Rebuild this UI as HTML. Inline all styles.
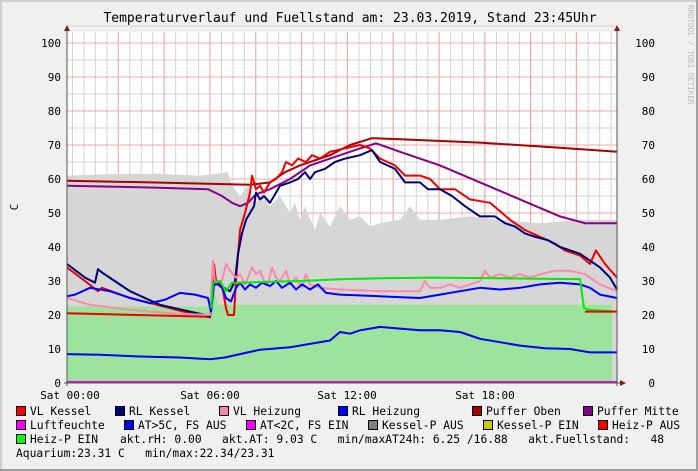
<!DOCTYPE html>
<html><head><meta charset="utf-8"><style>
body{margin:0;background:#f0f0f0;}
#w{position:relative;width:698px;height:471px;overflow:hidden;background:#f0f0f0;}
svg{position:absolute;left:0;top:0;}
text{font-family:"DejaVu Sans Mono","Liberation Mono",monospace;white-space:pre;}
</style></head><body><div id="w">
<svg id="s" width="698" height="471" xmlns="http://www.w3.org/2000/svg">
<rect x="0" y="0" width="698" height="471" fill="#f0f0f0"/>
<rect x="0" y="0" width="698" height="2" fill="#cfcfcf"/>
<rect x="0" y="0" width="2" height="471" fill="#cfcfcf"/>
<rect x="696" y="0" width="2" height="471" fill="#9f9f9f"/>
<rect x="0" y="469" width="698" height="2" fill="#9f9f9f"/>
<rect x="67" y="32" width="550" height="351" fill="#ffffff"/>
<g id="grid"></g>
<g id="data"></g>
<line x1="67" y1="28" x2="67" y2="386" stroke="#555" stroke-width="1"/>
<line x1="617" y1="28" x2="617" y2="386" stroke="#555" stroke-width="1"/>
<line x1="64" y1="383" x2="622" y2="383" stroke="#555" stroke-width="1"/>
<polygon points="64,31 70,31 67,25" fill="#8b1a1a"/>
<polygon points="614,31 620,31 617,25" fill="#8b1a1a"/>
<polygon points="620,380 620,386 626,383" fill="#8b1a1a"/>
<text x="350" y="22" font-size="13" text-anchor="middle" fill="#000">Temperaturverlauf und Fuellstand am: 23.03.2019, Stand 23:45Uhr</text>
<text transform="translate(688,5) rotate(90)" font-size="7.5" fill="#bbb">RRDTOOL / TOBI OETIKER</text>
<text transform="translate(18,207) rotate(-90)" font-size="11" text-anchor="middle" fill="#000">C</text>
<g id="lab" font-size="11" fill="#000"></g>
<g font-size="11" fill="#000">
<text x="70" y="399" text-anchor="middle">Sat 00:00</text>
<text x="210" y="399" text-anchor="middle">Sat 06:00</text>
<text x="347" y="399" text-anchor="middle">Sat 12:00</text>
<text x="485" y="399" text-anchor="middle">Sat 18:00</text>
</g>
<g id="leg" font-size="11.3" fill="#000"></g>
</svg>
<script>
var NS="http://www.w3.org/2000/svg";
function el(p,t,a){var e=document.createElementNS(NS,t);for(var k in a)e.setAttribute(k,a[k]);p.appendChild(e);return e;}
function Y(v){return 383-3.4*v;}
var g=document.getElementById('grid');
for(var x=72.5;x<617;x+=11.46){el(g,'line',{x1:x,y1:32,x2:x,y2:383,stroke:'#d4d4d4','stroke-width':1});}
for(var v=5;v<=105;v+=10){el(g,'line',{x1:67,y1:Y(v),x2:617,y2:Y(v),stroke:'#d4d4d4','stroke-width':1});}
for(var x=72.5+45.8;x<617;x+=45.8){el(g,'line',{x1:x,y1:32,x2:x,y2:383,stroke:'#eea8a8','stroke-width':1});}
for(var v=10;v<=100;v+=10){el(g,'line',{x1:67,y1:Y(v),x2:617,y2:Y(v),stroke:'#eea8a8','stroke-width':1});}
var lab=document.getElementById('lab');
for(var v=0;v<=100;v+=10){var t=el(lab,'text',{x:61,y:Y(v)+4,'text-anchor':'end'});t.textContent=v;
 var t2=el(lab,'text',{x:655,y:Y(v)+4,'text-anchor':'end'});t2.textContent=v;}
var d=document.getElementById('data');
function pts(a){var s=[];for(var i=0;i<a.length;i+=2)s.push(a[i]+','+Y(a[i+1]).toFixed(1));return s.join(' ');}
function area(a,col){var p=pts(a);el(d,'polygon',{points:'67,383 '+p+' '+a[a.length-2]+',383',fill:col});}
function line(a,col,w){el(d,'polyline',{points:pts(a),fill:'none',stroke:col,'stroke-width':w||2,'stroke-linejoin':'round'});}
var gr=[67,61,120,61.5,160,61.5,200,61,228,62,232,58,240,55,248,58,255,52,262,56,270,52,280,55,290,50,295,53,300,48,305,52,315,45,320,50,330,46,340,52,350,48,360,49,370,46,380,47,400,48,410,52,420,48,440,48,470,49,500,48,540,47,580,48,600,48,617,48];
area(gr,'#d6d6d6');
area([67,22.5,209,22.5,212,30,218,23,400,23,612,23,612,0],'#9de39d');
line([67,20.5,210,19.5],'#ee0000');
line([67,59.5,150,59,250,58.3,270,59,285,62,300,64,330,67,350,70,372,72,400,71.7,480,70.7,560,69.2,617,68],'#aa0000');
line([67,58,150,57.5,208,57,222,55,232,53,240,52,248,53,256,55.5,270,57,290,60,310,64,340,67,360,69,376,70.5,400,68,440,64,480,59,520,54,560,49,585,47,617,47],'#880088');
line([67,34,85,30,98,27,102,28,130,25,170,22,190,20.5,210,19.3,214,35,216,30,222,29,226,22,228,20,234,20,236,30,240,45,245,50,250,56,252,61,256,57,260,58,264,56,270,59,276,60,282,62,286,65,292,64,298,66,306,65,312,67,320,66,330,68,345,69,360,70,370,69,380,66,395,64,405,61,420,61,430,60,440,57,455,57,470,54,490,53,510,48,525,45,540,43,555,41,565,39,580,37.5,590,35,596,39,605,35,617,31],'#ee0000');
line([67,35,85,31,95,29.5,98,33.5,102,32.5,130,27,160,23,190,21,210,19.7,214,30,218,29,224,28,230,27,235,30,238,38,242,44,246,48,250,50,254,52,256,56,260,54,264,55,270,53,274,55,280,58,290,59,298,60,305,62,310,60,315,62,325,63,335,65,345,66,360,67,372,68.5,380,65,395,63,405,59,420,59,428,57,440,57,452,55,465,52,480,49,495,49,505,47,515,46,525,44,535,43,548,42,560,40,580,38,600,34,610,31,617,27.5],'#000077');
line([67,25,90,23,130,21.5,170,20.5,210,20,213,36,215,29,218,30,222,30,226,35,230,33,236,31,240,32,245,29,248,31,252,34,256,32,260,33,264,30,268,29,272,34,276,31,280,30,286,33,290,29,296,31,302,28,306,32,310,29,320,28,340,27.5,380,27,420,27,425,30,430,28,440,28,450,29,460,28,470,29,480,30,485,33,490,31,500,32,510,31,520,32,530,31,540,32,555,33,570,33,585,32,600,29,617,27],'#ff88aa');
line([67,25.5,75,26,90,28,110,27,130,25,150,23.5,165,24.5,180,26.5,195,26,208,25,211,21,214,29,218,29,222,28,226,25,231,24,236,28,240,29.5,245,27.5,250,29,256,28,262,29.5,270,28.5,276,30,282,28,290,29.5,296,27.5,302,29,310,27.5,318,29,326,26.5,340,26,380,25.5,420,25,440,26,460,27,480,28,500,27.5,520,28,540,29,560,29.5,580,29,590,28,600,26,617,25],'#0000ff');
line([211,22,213,29.5,220,30,226,27,232,29.5,240,29.5,300,30,340,30.5,380,30.8,430,31,500,30.8,560,30.6,580,30.6,584,22,590,21.5,617,21],'#00ee00');
line([585,21,617,21],'#ee0000');
line([67,8.5,100,8.3,140,7.8,180,7.5,210,7,225,7.5,240,8.5,260,9.8,290,10.5,310,11.5,330,12.5,340,15,350,14.5,360,15.5,370,16,380,16.5,400,16,420,15.5,440,15.5,460,15,480,13,500,12,520,11,545,10.2,570,10,590,9,617,9],'#0000ee');
line([67,0.3,617,0.3],'#ee00ee');
var lg=document.getElementById('leg');
function item(bx,by,col,txt){el(lg,'rect',{x:bx+0.5,y:by-8.5,width:9,height:9,fill:col,stroke:'#000','stroke-width':1});var t=el(lg,'text',{x:bx+14,y:by});t.textContent=txt;}
item(16,415,'#ff0000','VL Kessel');item(115,415,'#000077','RL Kessel');item(219,415,'#ff88aa','VL Heizung');item(338,415,'#0000ff','RL Heizung');item(472,415,'#aa0000','Puffer Oben');item(583,415,'#880088','Puffer Mitte');
item(16,429,'#ff00ff','Luftfeuchte');item(124,429,'#0000ff','AT>5C, FS AUS');item(246,429,'#ff00ff','AT<2C, FS EIN');item(368,429,'#808080','Kessel-P AUS');item(483,429,'#cccc00','Kessel-P EIN');item(598,429,'#ff0000','Heiz-P AUS');
item(16,443,'#00ff00','Heiz-P EIN');
var t=el(lg,'text',{x:120,y:443});t.textContent='akt.rH: 0.00   akt.AT: 9.03 C   min/maxAT24h: 6.25 /16.88   akt.Fuellstand:   48';
t=el(lg,'text',{x:16,y:457});t.textContent='Aquarium:23.31 C   min/max:22.34/23.31';
</script>
</div></body></html>
